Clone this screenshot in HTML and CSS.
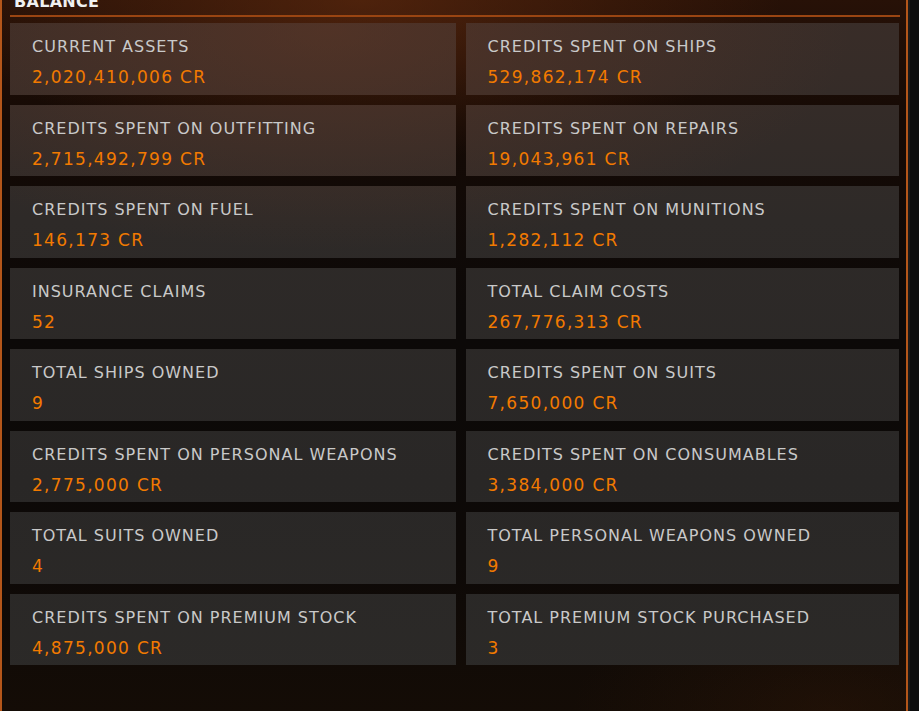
FILE: index.html
```html
<!DOCTYPE html>
<html lang="en">
<head>
    <meta charset="UTF-8">
    <meta name="viewport" content="width=device-width, initial-scale=1.0">
    <title>Balance</title>
    <link rel="stylesheet" href="styles.css">
</head>
<body>
    <div class="panel">
        <div class="panel-header"><h2 class="panel-title">BALANCE</h2></div>

        <div class="stats">
            <div class="stat"><div class="stat-label">CURRENT ASSETS</div><div class="stat-value">2,020,410,006 CR</div></div>
            <div class="stat"><div class="stat-label">CREDITS SPENT ON SHIPS</div><div class="stat-value">529,862,174 CR</div></div>
            <div class="stat"><div class="stat-label">CREDITS SPENT ON OUTFITTING</div><div class="stat-value">2,715,492,799 CR</div></div>
            <div class="stat"><div class="stat-label">CREDITS SPENT ON REPAIRS</div><div class="stat-value">19,043,961 CR</div></div>
            <div class="stat"><div class="stat-label">CREDITS SPENT ON FUEL</div><div class="stat-value">146,173 CR</div></div>
            <div class="stat"><div class="stat-label">CREDITS SPENT ON MUNITIONS</div><div class="stat-value">1,282,112 CR</div></div>
            <div class="stat"><div class="stat-label">INSURANCE CLAIMS</div><div class="stat-value">52</div></div>
            <div class="stat"><div class="stat-label">TOTAL CLAIM COSTS</div><div class="stat-value">267,776,313 CR</div></div>
            <div class="stat"><div class="stat-label">TOTAL SHIPS OWNED</div><div class="stat-value">9</div></div>
            <div class="stat"><div class="stat-label">CREDITS SPENT ON SUITS</div><div class="stat-value">7,650,000 CR</div></div>
            <div class="stat"><div class="stat-label">CREDITS SPENT ON PERSONAL WEAPONS</div><div class="stat-value">2,775,000 CR</div></div>
            <div class="stat"><div class="stat-label">CREDITS SPENT ON CONSUMABLES</div><div class="stat-value">3,384,000 CR</div></div>
            <div class="stat"><div class="stat-label">TOTAL SUITS OWNED</div><div class="stat-value">4</div></div>
            <div class="stat"><div class="stat-label">TOTAL PERSONAL WEAPONS OWNED</div><div class="stat-value">9</div></div>
            <div class="stat"><div class="stat-label">CREDITS SPENT ON PREMIUM STOCK</div><div class="stat-value">4,875,000 CR</div></div>
            <div class="stat"><div class="stat-label">TOTAL PREMIUM STOCK PURCHASED</div><div class="stat-value">3</div></div>
        </div>
    </div>
</body>
</html>
```

FILE: styles.css
```css
body {
    margin: 0;
    height: 711px;
    overflow: hidden;
    background-color: #0c0c0c;
    font-family: "DejaVu Sans", sans-serif;
}

/* main frame with the orange edges */
.panel {
    box-sizing: border-box;
    width: 908px;
    height: 711px;
    padding: 0 6px 0 8px;
    border-left: 2px solid #b4561a;
    border-right: 2px solid #b4561a;
    background:
        radial-gradient(ellipse 420px 160px at 360px 0px, rgba(110, 48, 16, 0.55), transparent),
        radial-gradient(ellipse 260px 120px at 830px 711px, rgba(60, 28, 8, 0.3), transparent),
        linear-gradient(180deg, #271107 0px, #150a05 120px, #0c0908 320px, #0d0907 560px, #140c06 711px);
    box-shadow: 2px 0 0 #1a1a1a;
}

.panel-header {
    height: 15px;
    border-bottom: 2px solid #9a4512;
    display: flex;
    align-items: flex-end;
    overflow: hidden;
}

.panel-title {
    margin: 0 0 6px 4px;
    font-size: 16px;
    line-height: 14px;
    font-weight: bold;
    color: #f0f0f0;
    letter-spacing: 0.3px;
}

.stats {
    display: grid;
    grid-template-columns: 446px 433px;
    grid-auto-rows: 71.5px;
    column-gap: 9.5px;
    row-gap: 10px;
    margin-top: 6px;
}

.stat {
    box-sizing: border-box;
    padding: 14px 22px 0 22px;
    background:
        radial-gradient(ellipse 520px 220px at 330px 30px, rgba(110, 58, 36, 0.45), transparent) fixed,
        linear-gradient(180deg, #3a2d28 0px, #2e2a28 220px, #292726 480px, #2c2a28 711px) fixed;
}

.stat-label {
    font-size: 16px;
    line-height: 20px;
    letter-spacing: 1px;
    color: #c9c9c9;
    white-space: nowrap;
}

.stat-value {
    margin-top: 9px;
    font-size: 17px;
    line-height: 22px;
    letter-spacing: 1.3px;
    color: #f27a00;
}
```
